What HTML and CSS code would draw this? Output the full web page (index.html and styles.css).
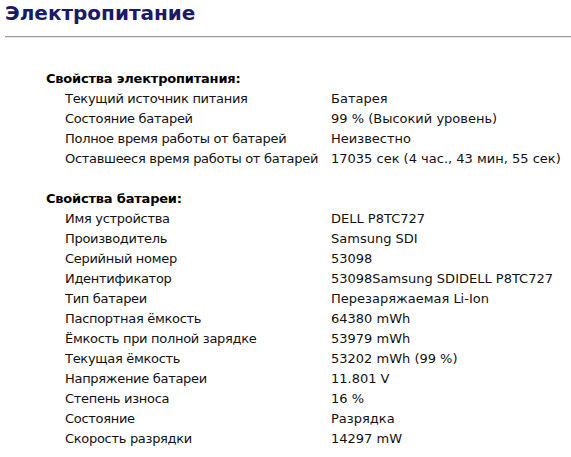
FILE: index.html
```html
<!DOCTYPE html>
<html lang="ru">
<head>
<meta charset="utf-8">
<title>Электропитание</title>
<link rel="stylesheet" href="styles.css">
</head>
<body>
<h1 class="title">Электропитание</h1>
<hr class="rule">
<div class="content">
  <section class="group">
    <h2 class="group-title">Свойства электропитания:</h2>
    <div class="props">
      <div class="label">Текущий источник питания</div><div class="value">Батарея</div>
      <div class="label">Состояние батарей</div><div class="value">99 % (Высокий уровень)</div>
      <div class="label">Полное время работы от батарей</div><div class="value">Неизвестно</div>
      <div class="label">Оставшееся время работы от батарей</div><div class="value">17035 сек (4 час., 43 мин, 55 сек)</div>
    </div>
  </section>
  <section class="group">
    <h2 class="group-title">Свойства батареи:</h2>
    <div class="props">
      <div class="label">Имя устройства</div><div class="value">DELL P8TC727</div>
      <div class="label">Производитель</div><div class="value">Samsung SDI</div>
      <div class="label">Серийный номер</div><div class="value">53098</div>
      <div class="label">Идентификатор</div><div class="value">53098Samsung SDIDELL P8TC727</div>
      <div class="label">Тип батареи</div><div class="value">Перезаряжаемая Li-Ion</div>
      <div class="label">Паспортная ёмкость</div><div class="value">64380 mWh</div>
      <div class="label">Ёмкость при полной зарядке</div><div class="value">53979 mWh</div>
      <div class="label">Текущая ёмкость</div><div class="value">53202 mWh (99 %)</div>
      <div class="label">Напряжение батареи</div><div class="value">11.801 V</div>
      <div class="label">Степень износа</div><div class="value">16 %</div>
      <div class="label">Состояние</div><div class="value">Разрядка</div>
      <div class="label">Скорость разрядки</div><div class="value">14297 mW</div>
    </div>
  </section>
</div>
</body>
</html>
```
FILE: styles.css
```css
html, body {
  margin: 0;
  padding: 0;
  background: #ffffff;
}
body {
  padding: 0 0 0 5px;
  font-family: "DejaVu Sans", Verdana, sans-serif;
  font-size: 13px;
  line-height: 20px;
  color: #111111;
}
.title {
  margin: 1px 0 0 0;
  font-size: 20px;
  line-height: 24px;
  font-weight: bold;
  color: #1a1a66;
}
.rule {
  margin: 11px 0 0 0;
  border: 0;
  border-top: 1px solid #9a9a9a;
  border-bottom: 1px solid #e6e6e6;
  height: 0;
}
.content {
  padding: 31px 0 0 41px;
}
.group {
  margin-bottom: 20px;
}
.group-title {
  margin: 0;
  font-size: 13px;
  line-height: 20px;
  font-weight: bold;
  letter-spacing: -0.2px;
  color: #000000;
}
.props {
  display: grid;
  grid-template-columns: 266px 1fr;
  padding-left: 19px;
}
.label, .value {
  white-space: nowrap;
}
.label {
  letter-spacing: -0.3px;
}
```
